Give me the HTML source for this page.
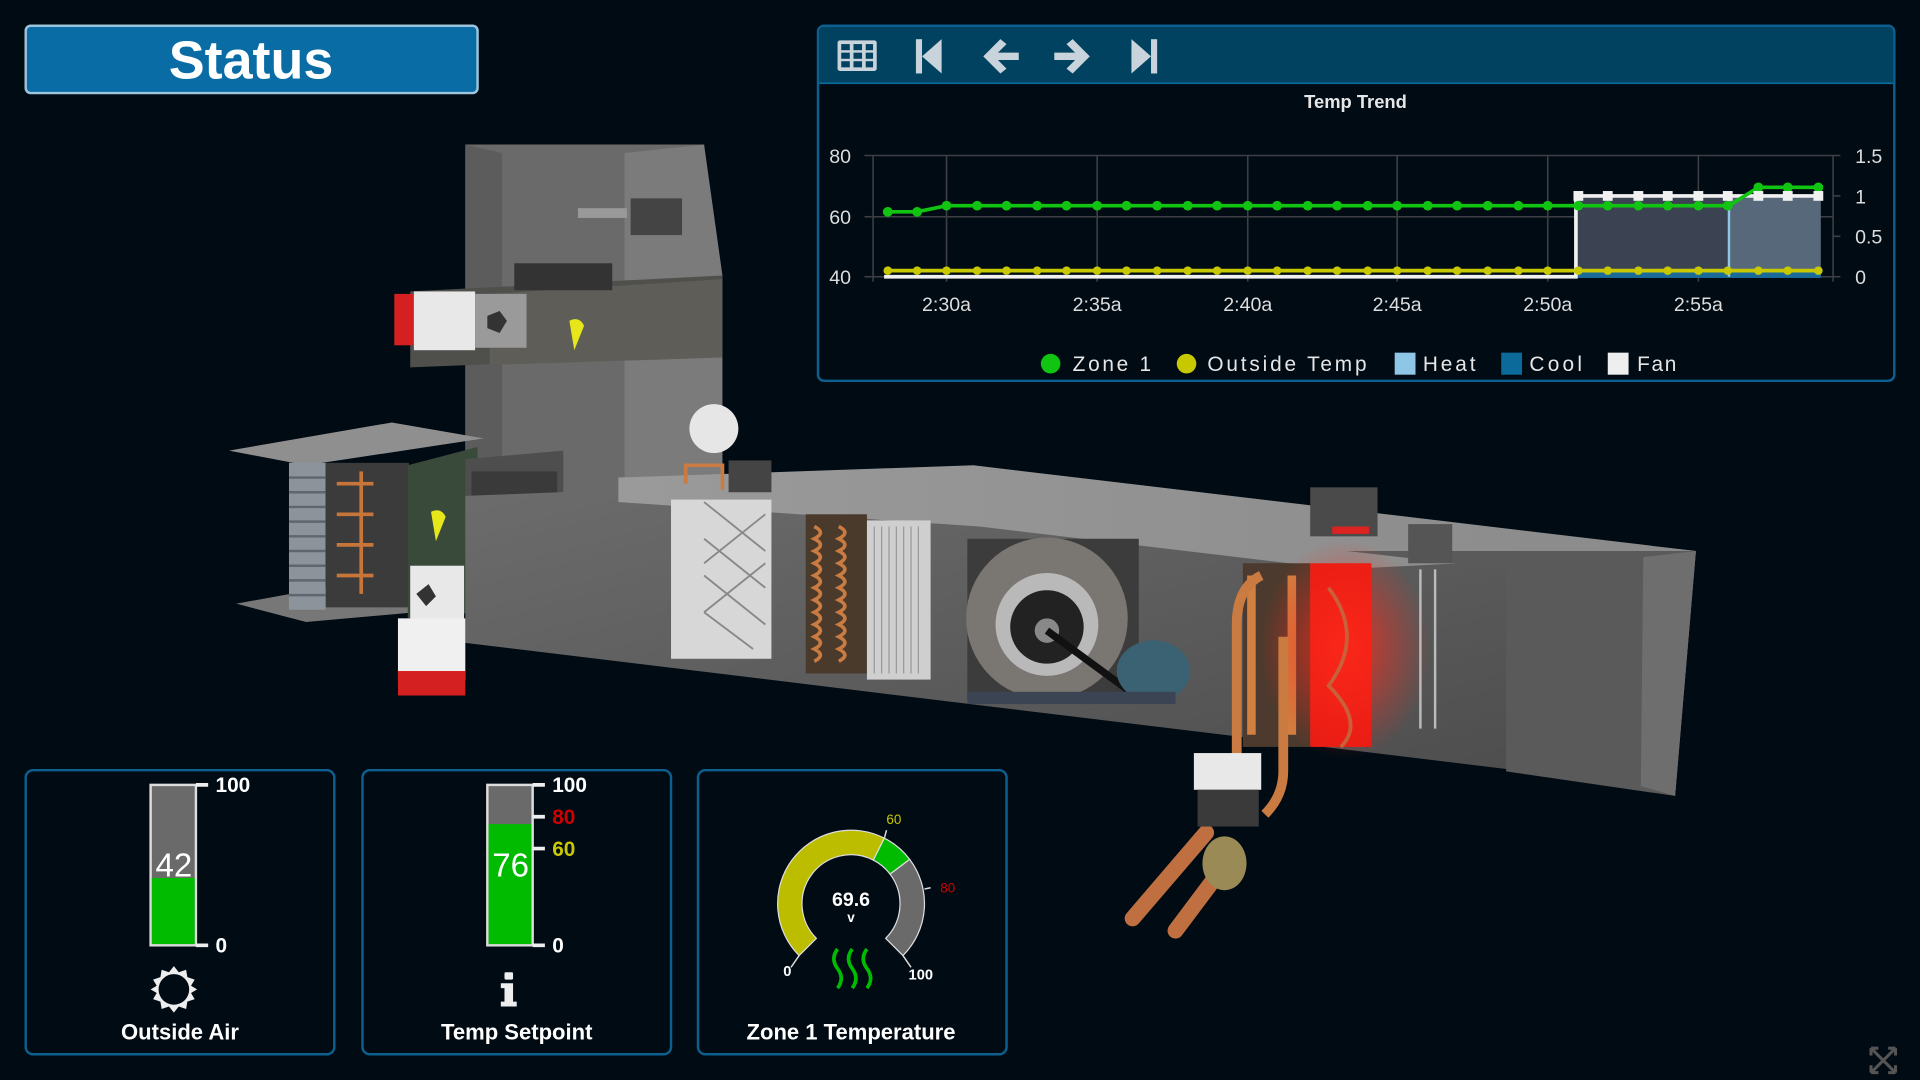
<!DOCTYPE html>
<html><head><meta charset="utf-8"><style>
html,body{margin:0;padding:0;background:#000b14;overflow:hidden}
svg{display:block}
text{font-family:"Liberation Sans",sans-serif}
.m{font-family:"Liberation Mono",monospace}
</style></head><body>
<svg width="1920" height="1080" viewBox="0 0 1568 882" xmlns="http://www.w3.org/2000/svg">
<defs>
<linearGradient id="wall" x1="0" y1="0" x2="1" y2="1"><stop offset="0" stop-color="#6d6d6d"/><stop offset="1" stop-color="#4a4a4a"/></linearGradient>
<linearGradient id="top" x1="0" y1="0" x2="1" y2="0"><stop offset="0" stop-color="#9a9a9a"/><stop offset="1" stop-color="#8a8a8a"/></linearGradient>
<radialGradient id="glow" cx="0.5" cy="0.5" r="0.5"><stop offset="0" stop-color="#ff2a1a" stop-opacity="0.8"/><stop offset="1" stop-color="#ff2a1a" stop-opacity="0"/></radialGradient>
</defs>
<rect width="1568" height="882" fill="#000b14"/>

<rect x="21" y="21" width="369" height="55" rx="4" fill="#0a6ca5" stroke="#9cc4dc" stroke-width="2"/>
<text x="205" y="64" font-size="44" font-weight="bold" fill="#fff" text-anchor="middle">Status</text>

<polygon points="380,118 575,118 575,405 380,405" fill="#6a6a6a"/>
<polygon points="510,125 575,118 590,225 590,400 510,405" fill="#7b7b7b"/>
<polygon points="380,118 410,125 410,400 380,405" fill="#5c5c5c"/>
<rect x="472" y="170" width="40" height="8" fill="#999"/>
<rect x="515" y="162" width="42" height="30" fill="#444"/>
<polygon points="335,238 590,225 590,290 335,300" fill="#4f4f4c"/>
<polygon points="400,240 590,228 590,292 400,298" fill="#5e5d57"/>
<rect x="420" y="215" width="80" height="22" fill="#333"/>
<rect x="322" y="240" width="20" height="42" fill="#d42020"/>
<rect x="338" y="238" width="50" height="48" fill="#e8e8e8"/>
<rect x="388" y="240" width="42" height="44" fill="#9a9a9a"/>
<path d="M398,258 l10,-4 l6,8 l-6,10 l-10,-4z" fill="#333"/>
<path d="M465,262 q8,-4 12,4 l-8,20z" fill="#e6e61a"/>
<polygon points="187,368 320,345 395,358 250,380" fill="#8f8f8f"/>
<polygon points="193,493 320,470 395,495 250,508" fill="#777"/>
<rect x="236" y="378" width="30" height="120" fill="#8d939a"/>
<rect x="266" y="378" width="68" height="118" fill="#3b3b3b"/>
<g stroke="#c8753a" stroke-width="3" fill="none"><path d="M295,385 v100 M275,395 h30 M275,420 h30 M275,445 h30 M275,470 h30"/></g>
<g stroke="#5f6670" stroke-width="2"><path d="M236,390h30M236,402h30M236,414h30M236,426h30M236,438h30M236,450h30M236,462h30M236,474h30M236,486h30"/></g>
<polygon points="333,380 390,365 390,500 333,505" fill="#39493a"/>
<path d="M352,418 q8,-4 12,4 l-8,20z" fill="#e6e61a"/>
<polygon points="380,375 460,368 460,480 380,500" fill="#4e4e4e"/>
<rect x="385" y="385" width="70" height="55" fill="#3a3a3a"/>
<polygon points="380,405 510,400 790,385 1385,450 1368,650 1230,628 380,525" fill="url(#wall)"/>
<polygon points="505,390 795,380 1385,450 1095,465 800,430 505,410" fill="url(#top)"/>
<polygon points="1100,450 1385,450 1368,650 1230,630 1230,465" fill="#5a5a5a"/>
<polygon points="1342,455 1385,450 1368,650 1340,642" fill="#6e6e6e"/>
<rect x="548" y="408" width="82" height="130" fill="#d7d7d7"/>
<g stroke="#888" stroke-width="1.5"><path d="M575,410 l50,40 M575,440 l50,40 M575,470 l50,40 M575,500 l40,30 M625,420 l-50,40 M625,460 l-50,40"/></g>
<rect x="658" y="420" width="50" height="130" fill="#4a3a2c"/>
<g stroke="#c97b42" stroke-width="3" fill="none"><path d="M665,430 q10,5 0,10 q10,5 0,10 q10,5 0,10 q10,5 0,10 q10,5 0,10 q10,5 0,10 q10,5 0,10 q10,5 0,10 q10,5 0,10 q10,5 0,10 q10,5 0,10"/><path d="M685,430 q10,5 0,10 q10,5 0,10 q10,5 0,10 q10,5 0,10 q10,5 0,10 q10,5 0,10 q10,5 0,10 q10,5 0,10 q10,5 0,10 q10,5 0,10 q10,5 0,10"/></g>
<rect x="708" y="425" width="52" height="130" fill="#cfcfcf"/>
<g stroke="#999" stroke-width="1"><path d="M714,430v120M720,430v120M726,430v120M732,430v120M738,430v120M744,430v120M750,430v120"/></g>
<rect x="790" y="440" width="140" height="130" fill="#3c3c3c"/>
<circle cx="855" cy="505" r="66" fill="#7a7672"/>
<circle cx="855" cy="510" r="42" fill="#b9b9b9"/>
<circle cx="855" cy="512" r="30" fill="#222"/>
<circle cx="855" cy="515" r="10" fill="#888"/>
<path d="M855,515 L930,570" stroke="#111" stroke-width="6"/>
<ellipse cx="942" cy="548" rx="30" ry="25" fill="#3b6272"/>
<rect x="790" y="565" width="170" height="10" fill="#3a4452"/>
<circle cx="583" cy="350" r="20" fill="#e6e6e6"/>
<rect x="595" y="376" width="35" height="26" fill="#444"/>
<path d="M560,395 v-15 h30 v20" stroke="#c97b42" stroke-width="3" fill="none"/>
<rect x="1015" y="460" width="55" height="150" fill="#4b3a2d"/>
<g stroke="#d08040" stroke-width="7" fill="none"><path d="M1022,470 v130 M1055,470 v130"/></g>
<rect x="1070" y="460" width="50" height="150" fill="#e81c14"/>
<ellipse cx="1098" cy="530" rx="70" ry="90" fill="url(#glow)"/>
<path d="M1085,480 q30,40 0,80 q30,30 10,50" stroke="#c8603a" stroke-width="3" fill="none"/>
<path d="M1160,465 v130 M1172,465 v130" stroke="#bbb" stroke-width="2" fill="none"/>
<rect x="1070" y="398" width="55" height="40" fill="#4a4a4a"/>
<rect x="1088" y="430" width="30" height="6" fill="#d22"/>
<rect x="1150" y="428" width="36" height="32" fill="#555"/>
<path d="M1030,470 q-20,10 -20,40 v110 M1048,520 v110 q0,20 -15,35" stroke="#c97b42" stroke-width="8" fill="none"/>
<path d="M985,680 L925,750 M1005,700 L960,760" stroke="#c07040" stroke-width="13" stroke-linecap="round"/>
<rect x="975" y="615" width="55" height="30" fill="#e8e8e8"/>
<rect x="978" y="645" width="50" height="30" fill="#3a3a3a"/>
<ellipse cx="1000" cy="705" rx="18" ry="22" fill="#9a8a55"/>
<rect x="335" y="462" width="44" height="50" fill="#e8e8e8"/>
<rect x="325" y="505" width="55" height="50" fill="#f0f0f0"/>
<rect x="325" y="548" width="55" height="20" fill="#d42020"/>
<path d="M340,485 l10,-8 l6,10 l-8,8z" fill="#333"/>

<rect x="668" y="21" width="879" height="290" rx="5" fill="#000b14" stroke="#0c5f8f" stroke-width="2"/>
<path d="M669,68 V26 q0,-4 4,-4 h869 q4,0 4,4 V68 z" fill="#00425f"/>
<line x1="669" y1="68" x2="1546" y2="68" stroke="#0c6a9a" stroke-width="1.5"/>
<rect x="684" y="33" width="32" height="25" rx="2" fill="#c9d3db"/>
<g fill="#00425f"><rect x="687" y="36" width="7" height="5"/><rect x="697" y="36" width="7" height="5"/><rect x="707" y="36" width="6" height="5"/><rect x="687" y="43" width="7" height="5"/><rect x="697" y="43" width="7" height="5"/><rect x="707" y="43" width="6" height="5"/><rect x="687" y="50" width="7" height="5"/><rect x="697" y="50" width="7" height="5"/><rect x="707" y="50" width="6" height="5"/></g>
<g fill="#c9d3db">
<rect x="748" y="32" width="5" height="28"/><polygon points="769,32 769,60 753,46"/>
<polygon points="803,46 817,32 822,36 815,43 832,43 832,49 815,49 822,56 817,60"/>
<polygon points="890,46 876,32 871,36 878,43 861,43 861,49 878,49 871,56 876,60"/>
<rect x="940" y="32" width="5" height="28"/><polygon points="924,32 924,60 940,46"/>
</g>
<text x="1107" y="88" font-size="15" font-weight="bold" fill="#e6e6e6" text-anchor="middle">Temp Trend</text>
<g stroke="#3d3f44" stroke-width="1.3">
<line x1="712" y1="127" x2="1497" y2="127"/><line x1="712" y1="177" x2="1497" y2="177"/><line x1="712" y1="226" x2="1497" y2="226"/>
<line x1="713" y1="127" x2="713" y2="230"/><line x1="773" y1="127" x2="773" y2="230"/><line x1="896" y1="127" x2="896" y2="230"/><line x1="1019" y1="127" x2="1019" y2="230"/><line x1="1141" y1="127" x2="1141" y2="230"/><line x1="1264" y1="127" x2="1264" y2="230"/><line x1="1387" y1="127" x2="1387" y2="230"/><line x1="1497" y1="127" x2="1497" y2="230"/>
<line x1="706" y1="127" x2="712" y2="127"/><line x1="706" y1="177" x2="712" y2="177"/><line x1="706" y1="226" x2="712" y2="226"/>
<line x1="1497" y1="160" x2="1503" y2="160"/><line x1="1497" y1="193" x2="1503" y2="193"/><line x1="1497" y1="127" x2="1503" y2="127"/><line x1="1497" y1="226" x2="1503" y2="226"/>
</g>
<g font-size="16" fill="#ddd">
<text x="695" y="133" text-anchor="end">80</text><text x="695" y="183" text-anchor="end">60</text><text x="695" y="232" text-anchor="end">40</text>
<text x="1515" y="133">1.5</text><text x="1515" y="166">1</text><text x="1515" y="199">0.5</text><text x="1515" y="232">0</text>
<text x="773" y="254" text-anchor="middle">2:30a</text><text x="896" y="254" text-anchor="middle">2:35a</text><text x="1019" y="254" text-anchor="middle">2:40a</text><text x="1141" y="254" text-anchor="middle">2:45a</text><text x="1264" y="254" text-anchor="middle">2:50a</text><text x="1387" y="254" text-anchor="middle">2:55a</text>
</g>
<rect x="1287" y="160" width="125" height="66" fill="#3b4352"/>
<rect x="1412" y="160" width="75" height="66" fill="#56687a"/>
<rect x="1287" y="222" width="200" height="5" fill="#1a6a9a"/>
<path d="M722,226 H1287 V160 H1487" stroke="#f0f0f0" stroke-width="3" fill="none"/>
<line x1="1412" y1="160" x2="1412" y2="226" stroke="#8ec6e6" stroke-width="2"/>
<line x1="724" y1="221" x2="1487" y2="221" stroke="#c8c800" stroke-width="3"/>
<path d="M725,173 L749,173 L773,168 L1412,168 L1436,153 L1487,153" stroke="#11c411" stroke-width="3" fill="none"/>
<g class="m" font-size="17" fill="#e6e6e6">
<circle cx="858" cy="297" r="8" fill="#11c411"/><text x="876" y="303" textLength="64">Zone 1</text>
<circle cx="969" cy="297" r="8" fill="#c8c800"/><text x="986" y="303" textLength="130">Outside Temp</text>
<rect x="1139" y="288" width="17" height="18" fill="#8ec6e6"/><text x="1162" y="303" textLength="43">Heat</text>
<rect x="1226" y="288" width="17" height="18" fill="#0c6a9a"/><text x="1249" y="303" textLength="43">Cool</text>
<rect x="1313" y="288" width="17" height="18" fill="#eee"/><text x="1337" y="303" textLength="32">Fan</text>
</g>

<g fill="none" stroke="#0c5f8f" stroke-width="2">
<rect x="21" y="629" width="252" height="232" rx="6"/>
<rect x="296" y="629" width="252" height="232" rx="6"/>
<rect x="570" y="629" width="252" height="232" rx="6"/>
</g>
<rect x="123" y="641" width="37" height="131" fill="#6a6a6a" stroke="#ddd" stroke-width="2"/>
<rect x="124" y="717" width="35" height="54" fill="#00bb00"/>
<path d="M160,641 h10 M160,772 h10" stroke="#eee" stroke-width="3"/>
<text x="176" y="647" font-size="17" font-weight="bold" fill="#fff">100</text>
<text x="176" y="778" font-size="17" font-weight="bold" fill="#fff">0</text>
<text x="142" y="716" font-size="27" fill="#fff" text-anchor="middle">42</text>
<g transform="translate(142,808)" fill="#eee">
<polygon points="0,-19 4,-14 10,-16 11,-10 17,-8 14,-3 19,0 14,3 17,8 11,10 10,16 4,14 0,19 -4,14 -10,16 -11,10 -17,8 -14,3 -19,0 -14,-3 -17,-8 -11,-10 -10,-16 -4,-14"/>
<circle r="12.5" fill="#000b14"/>
</g>
<text x="147" y="849" font-size="18" font-weight="bold" fill="#fff" text-anchor="middle">Outside Air</text>
<rect x="398" y="641" width="37" height="131" fill="#6a6a6a" stroke="#ddd" stroke-width="2"/>
<rect x="399" y="673" width="35" height="98" fill="#00bb00"/>
<path d="M435,641 h10 M435,667 h10 M435,693 h10 M435,772 h10" stroke="#eee" stroke-width="3"/>
<text x="451" y="647" font-size="17" font-weight="bold" fill="#fff">100</text>
<text x="451" y="673" font-size="17" font-weight="bold" fill="#d00000">80</text>
<text x="451" y="699" font-size="17" font-weight="bold" fill="#c8c800">60</text>
<text x="451" y="778" font-size="17" font-weight="bold" fill="#fff">0</text>
<text x="417" y="716" font-size="27" fill="#fff" text-anchor="middle">76</text>
<g fill="#eee"><rect x="412" y="794" width="7" height="6" rx="1"/><path d="M409,803 h10 v15 h3 v4 h-13 v-4 h3 v-11 h-3z"/></g>
<text x="422" y="849" font-size="18" font-weight="bold" fill="#fff" text-anchor="middle">Temp Setpoint</text>
<path d="M652.6,780.4 A60,60 0 0 1 722.2,684.5 L713.2,702.4 A40,40 0 0 0 666.7,766.3 Z" fill="#bdbd00" stroke="#ddd" stroke-width="1"/>
<path d="M722.2,684.5 A60,60 0 0 1 742.9,701.8 L726.9,713.9 A40,40 0 0 0 713.2,702.4 Z" fill="#00bb00" stroke="#ddd" stroke-width="1"/>
<path d="M742.9,701.8 A60,60 0 0 1 737.4,780.4 L723.3,766.3 A40,40 0 0 0 726.9,713.9 Z" fill="#6a6a6a" stroke="#ddd" stroke-width="1"/>
<path d="M652.6,780.4 L646,790 M737.4,780.4 L744,790 M722.2,684.5 L724,678 M755,726 L760,725" stroke="#ddd" stroke-width="1.2"/>
<text x="695" y="740" font-size="16" font-weight="bold" fill="#fff" text-anchor="middle">69.6</text>
<text x="695" y="753" font-size="11" font-weight="bold" fill="#fff" text-anchor="middle">v</text>
<text x="730" y="673" font-size="11" fill="#c8c800" text-anchor="middle">60</text>
<text x="774" y="729" font-size="11" fill="#d00000" text-anchor="middle">80</text>
<text x="643" y="797" font-size="12" font-weight="bold" fill="#fff" text-anchor="middle">0</text>
<text x="752" y="800" font-size="12" font-weight="bold" fill="#fff" text-anchor="middle">100</text>
<g stroke="#00bb00" stroke-width="3" fill="none"><path d="M684,775 q-6,8 0,16 q6,8 0,16"/><path d="M696,775 q-6,8 0,16 q6,8 0,16"/><path d="M708,775 q-6,8 0,16 q6,8 0,16"/></g>
<text x="695" y="849" font-size="18" font-weight="bold" fill="#fff" text-anchor="middle">Zone 1 Temperature</text>
<g stroke="#555" stroke-width="2.5" fill="none"><path d="M1528,856 l20,20 M1548,856 l-20,20 M1528,856 h6 M1528,856 v6 M1548,856 h-6 M1548,856 v6 M1528,876 h6 M1528,876 v-6 M1548,876 h-6 M1548,876 v-6"/></g>

<g fill="#11c411">
<circle cx="725" cy="173" r="4"/><circle cx="749" cy="173" r="4"/>
<circle cx="773" cy="168" r="4"/><circle cx="798" cy="168" r="4"/><circle cx="822" cy="168" r="4"/><circle cx="847" cy="168" r="4"/><circle cx="871" cy="168" r="4"/><circle cx="896" cy="168" r="4"/><circle cx="920" cy="168" r="4"/><circle cx="945" cy="168" r="4"/><circle cx="970" cy="168" r="4"/><circle cx="994" cy="168" r="4"/><circle cx="1019" cy="168" r="4"/><circle cx="1043" cy="168" r="4"/><circle cx="1068" cy="168" r="4"/><circle cx="1092" cy="168" r="4"/><circle cx="1117" cy="168" r="4"/><circle cx="1141" cy="168" r="4"/><circle cx="1166" cy="168" r="4"/><circle cx="1190" cy="168" r="4"/><circle cx="1215" cy="168" r="4"/><circle cx="1240" cy="168" r="4"/><circle cx="1264" cy="168" r="4"/><circle cx="1289" cy="168" r="4"/><circle cx="1313" cy="168" r="4"/><circle cx="1338" cy="168" r="4"/><circle cx="1362" cy="168" r="4"/><circle cx="1387" cy="168" r="4"/><circle cx="1411" cy="168" r="4"/><circle cx="1436" cy="153" r="4"/><circle cx="1460" cy="153" r="4"/><circle cx="1485" cy="153" r="4"/>
</g>
<g fill="#c8c800">
<circle cx="725" cy="221" r="3.5"/><circle cx="749" cy="221" r="3.5"/><circle cx="773" cy="221" r="3.5"/><circle cx="798" cy="221" r="3.5"/><circle cx="822" cy="221" r="3.5"/><circle cx="847" cy="221" r="3.5"/><circle cx="871" cy="221" r="3.5"/><circle cx="896" cy="221" r="3.5"/><circle cx="920" cy="221" r="3.5"/><circle cx="945" cy="221" r="3.5"/><circle cx="970" cy="221" r="3.5"/><circle cx="994" cy="221" r="3.5"/><circle cx="1019" cy="221" r="3.5"/><circle cx="1043" cy="221" r="3.5"/><circle cx="1068" cy="221" r="3.5"/><circle cx="1092" cy="221" r="3.5"/><circle cx="1117" cy="221" r="3.5"/><circle cx="1141" cy="221" r="3.5"/><circle cx="1166" cy="221" r="3.5"/><circle cx="1190" cy="221" r="3.5"/><circle cx="1215" cy="221" r="3.5"/><circle cx="1240" cy="221" r="3.5"/><circle cx="1264" cy="221" r="3.5"/><circle cx="1289" cy="221" r="3.5"/><circle cx="1313" cy="221" r="3.5"/><circle cx="1338" cy="221" r="3.5"/><circle cx="1362" cy="221" r="3.5"/><circle cx="1387" cy="221" r="3.5"/><circle cx="1411" cy="221" r="3.5"/><circle cx="1436" cy="221" r="3.5"/><circle cx="1460" cy="221" r="3.5"/><circle cx="1485" cy="221" r="3.5"/>
</g>
<g fill="#f0f0f0">
<rect x="1285" y="156" width="8" height="8"/><rect x="1309" y="156" width="8" height="8"/><rect x="1334" y="156" width="8" height="8"/><rect x="1358" y="156" width="8" height="8"/><rect x="1383" y="156" width="8" height="8"/><rect x="1407" y="156" width="8" height="8"/><rect x="1432" y="156" width="8" height="8"/><rect x="1456" y="156" width="8" height="8"/><rect x="1481" y="156" width="8" height="8"/>
</g>
</svg>
</body></html>
